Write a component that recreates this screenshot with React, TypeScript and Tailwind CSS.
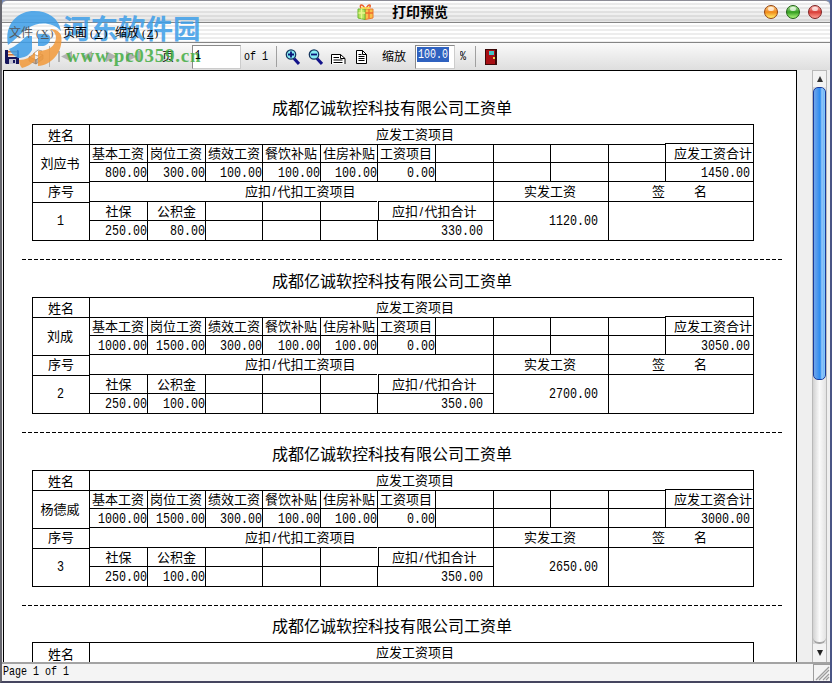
import type { ReactNode } from 'react';
import { clsx } from 'clsx';

type Slip = {
  id: number;
  name: string;
  earnings: string[];
  total: string;
  deductions: string[];
  deductionTotal: string;
  net: string;
};

const SLIPS: Slip[] = [
  {
    id: 1,
    name: '刘应书',
    earnings: ['800.00', '300.00', '100.00', '100.00', '100.00', '0.00', '', '', '', ''],
    total: '1450.00',
    deductions: ['250.00', '80.00', '', '', ''],
    deductionTotal: '330.00',
    net: '1120.00',
  },
  {
    id: 2,
    name: '刘成',
    earnings: ['1000.00', '1500.00', '300.00', '100.00', '100.00', '0.00', '', '', '', ''],
    total: '3050.00',
    deductions: ['250.00', '100.00', '', '', ''],
    deductionTotal: '350.00',
    net: '2700.00',
  },
  {
    id: 3,
    name: '杨德威',
    earnings: ['1000.00', '1500.00', '300.00', '100.00', '100.00', '0.00', '', '', '', ''],
    total: '3000.00',
    deductions: ['250.00', '100.00', '', '', ''],
    deductionTotal: '350.00',
    net: '2650.00',
  },
];

const EARNING_LABELS = ['基本工资', '岗位工资', '绩效工资', '餐饮补贴', '住房补贴', '工资项目', '', '', '', ''];
const DEDUCTION_LABELS = ['社保', '公积金', '', '', ''];

const STRIPES =
  'bg-[repeating-linear-gradient(to_bottom,#ffffff_0px,#ffffff_2px,#ededed_2px,#ededed_4px)]';

export default function App() {
  return (
    <div className="relative flex h-[683px] w-[832px] flex-col overflow-hidden border-r-2 border-b-2 border-l-2 border-r-[#4a5585] border-b-[#45455f] border-l-[#66666e] bg-[#efefef] font-['Liberation_Sans','Noto_Sans_CJK_SC',sans-serif] text-black">
      <TitleBar />
      <MenuBar />
      <Toolbar />

      <div className="flex h-[592px] shrink-0">
        <div className="ml-px h-full w-[794px] shrink-0 overflow-hidden border-t border-r border-l border-black bg-white">
          {SLIPS.map((slip) => (
            <PaySlip key={slip.id} slip={slip} />
          ))}
          <PartialSlip />
        </div>
        <div className="w-[15px] shrink-0" />
        <ScrollBar />
      </div>

      <div className="flex h-[19px] shrink-0 justify-between border-t-2 border-[#a3a3a3] bg-[#f4f4f4]">
        <Mono size="sm" className="ml-px h-[16px] origin-left leading-[16px]">Page 1 of 1</Mono>
        <svg className="h-[17px] w-[17px]" viewBox="0 0 17 17" fill="none" stroke="#9d9d9d">
          <path d="M.5 0v17M0 .5h17" />
          <path d="M3 16 16 3M6 16 16 6M10 16l6-6M13 16l3-3" strokeWidth="1.3" />
        </svg>
      </div>

      <Watermark />
    </div>
  );
}

function TitleBar() {
  return (
    <div className="h-[23px] shrink-0 bg-[#7288b8]">
      <div className={clsx('relative flex h-full items-center rounded-t-[5px] border-t border-b border-t-[#8c8c96] border-b-[#858585]', STRIPES)}>
        <div className="absolute inset-0 bg-linear-to-b from-transparent to-black/10" />
        <svg className="relative ml-[355px] h-4 w-[17px]" viewBox="0 0 17 16">
          <path d="M8 5h8v9l-8 1.500z" fill="#f9c04a" stroke="#ea7a2c" />
          <path d="M1 5h7v10.500L1 14z" fill="#b4e25c" stroke="#6cb92f" />
          <path d="M4.500 5v9.500M1.500 9H8" stroke="#e9f58c" strokeWidth="1.500" />
          <path d="M12 5v9.500M8.500 9H16" stroke="#ee6a2e" strokeWidth="1.300" />
          <path d="M8 4.500C5-1 2 1 4 4M9 4.500c3-5.500 6-3.500 3-.5" fill="none" stroke="#ec5f2a" strokeWidth="1.500" />
          <path d="M4 4h9" stroke="#fbe34c" strokeWidth="1.500" />
        </svg>
        <span className="relative ml-[18px] text-[14px] leading-5 font-bold">打印预览</span>
        <div className="relative ml-auto flex gap-[8px] pr-[8px]">
          <Orb className="border-[#93400c] from-[#ffd28a] via-[#f08a12] to-[#fff06a]" />
          <Orb className="border-[#1d5d12] from-[#b9eca4] via-[#2f9e1c] to-[#a9f57a]" />
          <Orb className="border-[#7d2020] from-[#f5b0ac] via-[#d83a36] to-[#ff9d94]" />
        </div>
      </div>
    </div>
  );
}

function Orb({ className }: { className: string }) {
  return (
    <span className={clsx('relative block h-[14px] w-[14px] rounded-full border bg-linear-to-b', className)}>
      <span className="absolute top-px left-[3px] h-1 w-1.5 rounded-full bg-white/70" />
    </span>
  );
}

function MenuBar() {
  return (
    <div className={clsx('flex h-[20px] shrink-0 items-center border-b border-[#858585] pl-[7px] text-[12px] leading-4', STRIPES)}>
      <MenuItem label="文件" hotkey="X" className="w-[54px] text-[#55585c]" />
      <MenuItem label="页面" hotkey="Y" className="w-[52px]" />
      <MenuItem label="缩放" hotkey="Z" />
    </div>
  );
}

function MenuItem({ label, hotkey, className }: { label: string; hotkey: string; className?: string }) {
  return (
    <span className={clsx('z-10 flex whitespace-nowrap', className)}>
      {label}
      <span className="ml-[3px] flex gap-px font-['Liberation_Serif',serif] text-[11px]">
        (<u>{hotkey}</u>)
      </span>
    </span>
  );
}

function Toolbar() {
  return (
    <div className="flex h-[27px] shrink-0 items-center bg-linear-to-b from-[#fafafa] to-[#dedede] text-[12px]">
      <svg className="ml-[3px] h-[14px] w-[14px] shrink-0" viewBox="0 0 14 14">
        <path d="M0 0h13l1 1v13H1l-1-1z" fill="#15155c" />
        <path d="M3 0h9v7H3z" fill="#f6e3d2" />
        <path d="M3 1h9v1.500H3zM3 4h9v1.500H3z" fill="#d77a36" />
        <path d="M4 9h7v5H4z" fill="#c3c3d2" />
        <path d="M8 10h2v3H8z" fill="#15155c" />
      </svg>
      <svg className="ml-[9px] h-4 w-4 shrink-0" viewBox="0 0 16 16" stroke="#8c7c6e" strokeWidth=".7">
        <path d="m1 8 8-4 6 2-7 5z" fill="#eeeae4" />
        <path d="m1 8 7 3v4l-7-3z" fill="#d5a780" />
        <path d="m8 11 7-5v4l-7 5z" fill="#b8b2aa" />
        <path d="m5 5 5-4 4 1-4 5z" fill="#fff" />
      </svg>
      <span className="ml-[5px] h-[21px] w-px bg-[#b0b0b0]" />
      <svg className="ml-[7px] h-[11px] w-[86px] shrink-0" viewBox="0 0 86 11" fill="#b2b2b2">
        <path d="M1 0h2v11H1zM15 0v11L4 5.500zM35 0v11L25 5.500zM49 0v11l11-5.500zM69 0v11l11-5.500zM81 0h2v11h-2z" />
      </svg>
      <span className="ml-[19px] w-[30px] shrink-0">页</span>
      <div className="flex h-[24px] w-[49px] shrink-0 border border-t-[#8a8a8a] border-r-[#cccccc] border-b-[#cccccc] border-l-[#8a8a8a] bg-white pl-[2px]">
        <Mono size="sm" className="z-10 origin-left leading-[20px]">1</Mono>
      </div>
      <span className="ml-[3px] flex w-[32px] shrink-0">
        <Mono size="sm" className="origin-left">of 1</Mono>
      </span>
      <span className="h-[21px] w-px shrink-0 bg-[#a0a0a0]" />
      <Magnifier plus className="ml-[8px]" />
      <Magnifier className="ml-[8px]" />
      <svg className="mt-[5px] ml-[8px] h-[10px] w-[15px] shrink-0" viewBox="0 0 15 10" fill="#fff" stroke="#000">
        <path d="M.5 10V.5h9l4.500 4V10" />
        <path d="M9.500.5v4H14M2.500 3.500H8M2.500 6h9M2.500 8.500h9" fill="none" />
      </svg>
      <svg className="mt-px ml-[10px] h-[14px] w-[11px] shrink-0" viewBox="0 0 11 14" fill="#fff" stroke="#000">
        <path d="M.5.5h6l4 4v9H.5z" />
        <path d="M6.500.5v4h4M2.500 4.500h3M2.500 6.500h6M2.500 8.500h6M2.500 10.500h6" fill="none" />
      </svg>
      <span className="ml-[15px] w-[33px] shrink-0">缩放</span>
      <div className="flex h-[24px] w-[40px] shrink-0 border border-t-[#8a8a8a] border-r-[#cccccc] border-b-[#cccccc] border-l-[#8a8a8a] bg-white p-px">
        <span className="flex h-[15px] w-[32px] bg-[#2f62c0] pl-px text-white">
          <Mono size="sm" className="origin-left leading-[15px]">100.0</Mono>
        </span>
      </div>
      <span className="ml-[5px] flex w-[15px] shrink-0">
        <Mono size="sm" className="origin-left">%</Mono>
      </span>
      <span className="h-[21px] w-px shrink-0 bg-[#a0a0a0]" />
      <svg className="ml-[9px] h-[16px] w-[12px] shrink-0" viewBox="0 0 12 16">
        <path d="M0 0h12v16H0z" fill="#3b0808" />
        <path d="M1 1h9v14H1z" fill="#a80f14" />
        <path d="M4 2h5v4H4z" fill="#43c5c7" />
        <path d="M8 8h2v2H8z" fill="#f1d34b" />
      </svg>
    </div>
  );
}

function Magnifier({ plus, className }: { plus?: boolean; className?: string }) {
  return (
    <svg className={clsx('h-4 w-[15px] shrink-0', className)} viewBox="0 0 15 16" fill="none">
      <path d="m9 9.500 5 5.500" stroke="#12128a" strokeWidth="3" />
      <circle cx="6" cy="5.500" r="4.700" fill="#85ecf4" stroke="#17375f" strokeWidth="1.300" />
      <path d={plus ? 'M3 5.500h6M6 2.500v6' : 'M3 5.500h6'} stroke="#0a1478" strokeWidth="1.800" />
    </svg>
  );
}

// Tall narrow digits, like the bitmap font the report prints with
function Mono({ children, size = 'md', className }: { children: ReactNode; size?: 'sm' | 'md'; className?: string }) {
  return (
    <span
      className={clsx(
        "inline-block font-['Liberation_Mono',monospace] whitespace-pre",
        size === 'md' ? 'scale-x-[.778] text-[15px]' : 'scale-x-[.77] text-[13px]',
        className,
      )}
    >
      {children}
    </span>
  );
}

function Cell({ children, className }: { children?: ReactNode; className?: string }) {
  return (
    <div className={clsx('flex min-w-0 items-center border-t border-l border-black whitespace-nowrap', className)}>
      {children}
    </div>
  );
}

function Slash() {
  return <span className="w-[6.5px] text-center">/</span>;
}

function SlipTitle() {
  return (
    <h2 className="h-[27px] w-[721px] pl-[240px] text-[16px] leading-[24px] font-normal">成都亿诚软控科技有限公司工资单</h2>
  );
}

function PaySlip({ slip }: { slip: Slip }) {
  return (
    <div className="h-[173px] pt-[26px] pl-[28px]">
      <SlipTitle />
      <div className="flex h-[117px] w-[722px] border-r border-b border-black text-[13px] leading-[17px]">
        <div className="grid w-[57px] shrink-0 grid-rows-[20px_38px_20px_38px] text-center">
          <Cell className="justify-center pt-px">姓名</Cell>
          <Cell className="justify-center pr-[2px] pb-px">{slip.name}</Cell>
          <Cell className="justify-center pb-[3px]">序号</Cell>
          <Cell className="justify-center">
            <Mono className="origin-center">{slip.id}</Mono>
          </Cell>
        </div>
        <div className="grid grid-cols-[58px_58px_57px_58px_57px_58px_58px_57px_58px_57px_88px] grid-rows-[20px_18px_19px_20px_19px_20px]">
          <Cell className="col-span-11 pb-px pl-[286px]">应发工资项目</Cell>

          {EARNING_LABELS.map((label, i) => (
            <Cell key={i} className="pl-[2px]">{label}</Cell>
          ))}
          <Cell className="-mt-px pl-[8px]">应发工资合计</Cell>

          {slip.earnings.map((value, i) => (
            <Cell key={i} className="justify-end pt-[2px]">
              <Mono className="origin-right">{value}</Mono>
            </Cell>
          ))}
          <Cell className="justify-end pt-[2px] pr-[3px]">
            <Mono className="origin-right">{slip.total}</Mono>
          </Cell>

          <Cell className="col-span-7 pb-px pl-[155px]">应扣<Slash />代扣工资项目</Cell>
          <Cell className="col-span-2 pb-px pl-[30px]">实发工资</Cell>
          <Cell className="col-span-2 gap-[29px] pb-px pl-[43px]">
            <span>签</span>
            <span>名</span>
          </Cell>

          {DEDUCTION_LABELS.map((label, i) => (
            <Cell key={i} className="justify-center">{label}</Cell>
          ))}
          <Cell className="col-span-2 ml-px pl-[13px]">应扣<Slash />代扣合计</Cell>
          <Cell className="col-span-2 row-span-2 justify-end pt-px pr-[10px]">
            <Mono className="origin-right">{slip.net}</Mono>
          </Cell>
          <Cell className="col-span-2 row-span-2" />

          {slip.deductions.map((value, i) => (
            <Cell key={i} className="justify-end pt-[2px]">
              <Mono className="origin-right">{value}</Mono>
            </Cell>
          ))}
          <Cell className="col-span-2 justify-end pt-[2px] pr-[10px]">
            <Mono className="origin-right">{slip.deductionTotal}</Mono>
          </Cell>
        </div>
      </div>
      <div className="mt-[18px] -ml-[10px] h-px w-[760px] bg-[repeating-linear-gradient(to_right,#000_0px,#000_4px,transparent_4px,transparent_6px)]" />
    </div>
  );
}

// Last slip on screen: only its heading row is scrolled into view
function PartialSlip() {
  return (
    <div className="pt-[25px] pl-[28px]">
      <SlipTitle />
      <div className="flex h-[20px] w-[722px] border-r border-black text-[13px] leading-[17px]">
        <Cell className="w-[57px] justify-center pt-[3px]">姓名</Cell>
        <Cell className="flex-1 pb-px pl-[286px]">应发工资项目</Cell>
      </div>
    </div>
  );
}

function ScrollBar() {
  return (
    <div className="flex w-[15px] shrink-0 flex-col border-x border-[#b9b9b9] bg-linear-to-r from-[#d2d2d2] via-[#fafafa] to-[#e2e2e2]">
      <div className="flex h-[17px] shrink-0 items-center justify-center border-t border-[#b9b9b9] bg-[#f3f3f3]">
        <span className="border-x-[3px] border-b-[6px] border-x-transparent border-b-[#333]" />
      </div>
      <div className="flex h-[293px] shrink-0 rounded-[5px] border border-[#183a9c] bg-linear-to-r from-[#6fa5ea] via-[#2f8df0] to-[#8ecbfb] pl-[7px]">
        <div className="h-full w-[2px] bg-white/25" />
      </div>
      <div className="flex-1 rounded-b-[6px] border-b-2 border-[#a5a5a5]" />
      <div className="flex h-[18px] shrink-0 items-center justify-center bg-[#f3f3f3]">
        <span className="border-x-[3px] border-t-[6px] border-x-transparent border-t-[#222]" />
      </div>
    </div>
  );
}

function Watermark() {
  return (
    <div className="pointer-events-none absolute top-[9px] left-[3px] flex opacity-85">
      <svg className="h-[60px] w-[58px] shrink-0" viewBox="0 0 58 60">
        <path d="M3 36C-1 16 12 2 29 2c14 0 25 7 27 20-9-10-24-9-33-3C16 24 10 31 3 36z" fill="#3d9ee8" />
        <path d="M4 40c8-3 13-9 18-13h5v14c-3 6-8 8-14 8-4-2-7-5-9-9z" fill="#3d9ee8" />
        <path d="M33 25h7c5 0 6 3 5 6-1 4-5 6-8 6h-4z" fill="#3d9ee8" />
        <path d="M56 26c3 15-8 30-23 31V42c11 0 17-5 18-13 0-4-2-7-6-9 5 0 9 2 11 6z" fill="#f29a3b" />
        <path d="M14 51c7 0 12-3 16-8v8c-4 5-9 7-13 8-2-2-3-5-3-8z" fill="#f29a3b" />
      </svg>
      <div className="pt-[5px]">
        <div className="text-[27.500px] leading-8 font-bold text-[#3d9ee8]">河东软件园</div>
        <div className="ml-[3px] font-['Liberation_Serif',serif] text-[19px] leading-[20px] font-bold tracking-[.75px] text-[#43ad43]">
          www.pc0359.cn
        </div>
      </div>
    </div>
  );
}
